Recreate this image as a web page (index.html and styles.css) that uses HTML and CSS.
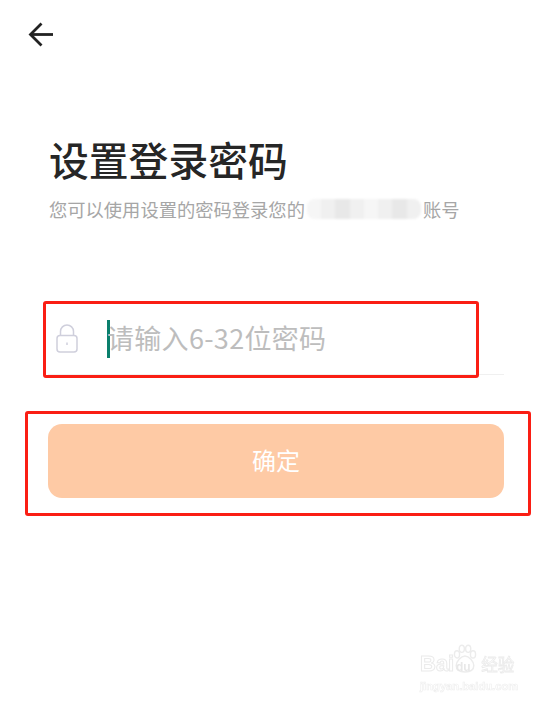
FILE: index.html
```html
<!DOCTYPE html>
<html lang="zh-CN">
<head>
    <meta charset="UTF-8">
    <meta name="viewport" content="width=device-width, initial-scale=1.0">
    <title>设置登录密码</title>
    <link rel="stylesheet" href="styles.css">
</head>
<body>

<div class="page">
    <button class="back" aria-label="返回">
        <svg width="28" height="28" viewBox="0 0 28 28" fill="none" stroke="#222" stroke-width="2.8">
            <path d="M26 14.5H4"/>
            <path d="M14.5 3.5L3.5 14.5L14.5 25.5"/>
        </svg>
    </button>

    <h1 class="title">设置登录密码</h1>
    <p class="subtitle">您可以使用设置的密码登录您的<span class="mosaic"><i></i><i></i><i></i><i></i><i></i><i></i><i></i><i></i></span>账号</p>

    <div class="field">
        <svg class="lock" width="22" height="29" viewBox="0 0 22 29" fill="none" stroke="#cfcfdc" stroke-width="1.5">
            <rect x="1" y="11.5" width="20" height="16.5" rx="3"/>
            <path d="M4.5 11.5V7.5a6.5 6.5 0 0 1 13 0v4"/>
            <path d="M11 18.5v2.5"/>
        </svg>
        <span class="caret"></span>
        <span class="placeholder">请输入6-32位密码</span>
    </div>

    <button class="submit">确定</button>

    <div class="mark mark-input"></div>
    <div class="mark mark-submit"></div>

    <div class="watermark">
        <div class="wm-top">
            <span class="wm-bai">Bai</span>
            <svg class="wm-paw" width="30" height="32" viewBox="0 0 30 40" fill="none" stroke="#ececec" stroke-width="1.8">
                <ellipse cx="5" cy="13" rx="3.2" ry="4.5"/>
                <ellipse cx="11" cy="6" rx="3.2" ry="4.5"/>
                <ellipse cx="19" cy="6" rx="3.2" ry="4.5"/>
                <ellipse cx="25" cy="13" rx="3.2" ry="4.5"/>
                <path d="M15 15c-5 0-11 7-11 12 0 7 6 8 11 8s11-1 11-8c0-5-6-12-11-12z"/>
            </svg>
            <span class="wm-du">du</span>
            <span class="wm-cn">经验</span>
        </div>
        <div class="wm-url">jingyan.baidu.com</div>
    </div>
</div>

</body>
</html>
```

FILE: styles.css
```css
* {
    box-sizing: border-box;
}

body {
    margin: 0;
    background-color: #fff;
    font-family: "Noto Sans CJK SC", "Noto Sans", sans-serif;
}

.page {
    position: relative;
    width: 547px;
    height: 703px;
    padding: 20px 43px 0 48px;
    overflow: hidden;
}

.back {
    display: block;
    width: 28px;
    height: 28px;
    margin-left: -21px;
    padding: 0;
    border: none;
    background: none;
}

.title {
    margin: 82px 0 0 1px;
    font-size: 39.8px;
    line-height: 58px;
    font-weight: 500;
    color: #262626;
}

.subtitle {
    display: flex;
    align-items: center;
    margin: 8px 0 0 1px;
    font-size: 18.3px;
    line-height: 26px;
    color: #a6a6a6;
}

.mosaic {
    display: flex;
    width: 114px;
    height: 20px;
    margin: 0 2px 0 2px;
    border-radius: 8px;
    overflow: hidden;
    filter: blur(1px);
}

.mosaic i {
    flex: 1;
    background-color: #f0f0f0;
}

.mosaic i:nth-child(odd) {
    background-color: #f6f6f6;
}

.mosaic i:nth-child(3),
.mosaic i:nth-child(7) {
    background-color: #e8e8e8;
}

.field {
    display: flex;
    align-items: center;
    height: 72px;
    margin-top: 81px;
    border-bottom: 1px solid #f0f0f0;
}

.lock {
    flex: none;
    margin: 0 0 0 8px;
}

.caret {
    flex: none;
    width: 3px;
    height: 38px;
    margin-left: 29px;
    background-color: #0a7f6c;
}

.placeholder {
    margin: -2px 0 0 -3px;
    font-size: 27px;
    letter-spacing: 0.3px;
    color: #bdbdbd;
}

.submit {
    display: block;
    width: 456px;
    height: 74px;
    margin-top: 49px;
    padding: 0 0 3px;
    border: none;
    border-radius: 14px;
    background-color: #fecaa5;
    color: #fff;
    font-family: inherit;
    font-size: 24px;
}

/* red boxes drawn on top of the screenshot */
.mark {
    position: absolute;
    border: 3px solid #fa1e14;
    border-radius: 3px;
}

.mark-input {
    left: 43px;
    top: 301px;
    width: 436px;
    height: 77px;
}

.mark-submit {
    left: 25px;
    top: 411px;
    width: 506px;
    height: 105px;
}

.watermark {
    position: absolute;
    left: 420px;
    top: 643px;
    width: 118px;
    color: #fff;
    filter: blur(0.4px);
}

.wm-top {
    display: flex;
    align-items: flex-end;
    height: 33px;
}

.wm-bai {
    font-family: "Liberation Sans", sans-serif;
    font-size: 22px;
    line-height: 24px;
    font-weight: 700;
    -webkit-text-stroke: 1px #ebebeb;
}

.wm-paw {
    flex: none;
    margin-left: -4px;
}

.wm-du {
    position: absolute;
    left: 36px;
    top: 17px;
    font-family: "Liberation Sans", sans-serif;
    font-size: 12px;
    font-weight: 700;
    color: #e8e8e8;
}

.wm-cn {
    margin-left: 1px;
    font-size: 16.5px;
    line-height: 24px;
    -webkit-text-stroke: 0.8px #ebebeb;
}

.wm-url {
    margin-top: 2px;
    font-family: "Liberation Sans", sans-serif;
    font-size: 11.2px;
    line-height: 16px;
    font-weight: 700;
    -webkit-text-stroke: 0.6px #eeeeee;
}
```
